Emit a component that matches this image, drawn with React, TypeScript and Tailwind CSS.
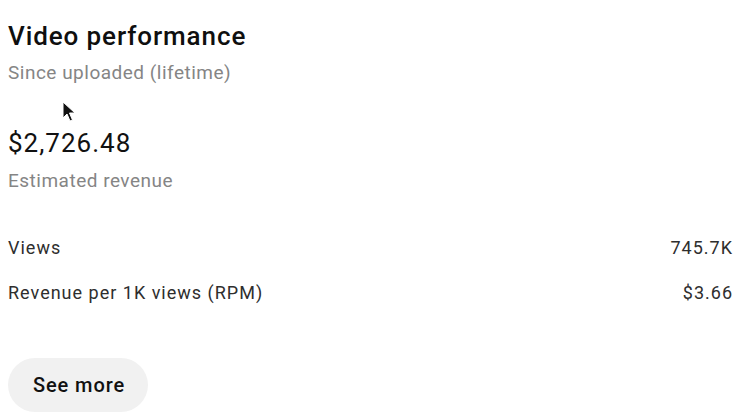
export default function App() {
  return (
    <div
      className="relative w-[750px] h-[420px] bg-white overflow-hidden text-[#0f0f0f]"
      style={{ fontFamily: "Roboto, 'Liberation Sans', sans-serif" }}
    >
      <div className="pl-[8px] pr-[17px] pt-[19px]">
        <h1 className="text-[26px] leading-[34px] font-medium tracking-[0.9px]">Video performance</h1>
        <p className="mt-[8px] text-[19px] leading-[24px] tracking-[0.5px] text-[#858585]">
          Since uploaded (lifetime)
        </p>

        <div className="mt-[41px] text-[26px] leading-[34px] font-normal tracking-[1px] text-[#111]">$2,726.48</div>
        <p className="mt-[9px] text-[19px] leading-[24px] tracking-[0.5px] text-[#858585]">Estimated revenue</p>

        <div className="mt-[43px] flex flex-col gap-[21px] text-[18px] leading-[24px] tracking-[1px] text-[#2e2e2e]">
          <div className="flex justify-between">
            <span>Views</span>
            <span>745.7K</span>
          </div>
          <div className="flex justify-between">
            <span>Revenue per 1K views (RPM)</span>
            <span>$3.66</span>
          </div>
        </div>

        <button className="mt-[53px] h-[54px] pl-[25px] pr-[23px] rounded-full bg-[#f1f1f1] text-[20px] font-medium tracking-[0.9px] text-[#111]">
          See more
        </button>
      </div>

      <svg
        className="absolute left-[62px] top-[101px]"
        width="16"
        height="22"
        viewBox="0 0 16 22"
      >
        <path d="M1 1 L1 17 L5 13 L8 20 L10.5 19 L7.5 12 L13 12 Z" fill="#111" stroke="#fff" strokeWidth="1" />
      </svg>
    </div>
  );
}
